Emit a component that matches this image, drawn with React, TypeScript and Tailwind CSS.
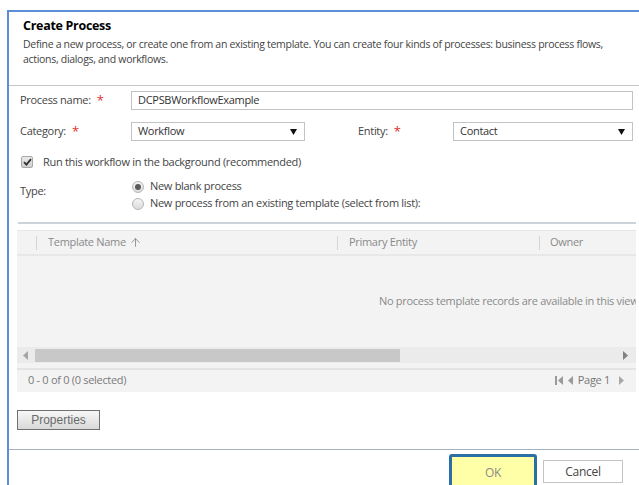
import { ArrowUp } from "lucide-react";

const Required = () => <span className="ml-[6px] text-[#e0312a] text-[13px] leading-none">*</span>;

const SelectBox = ({ value, width }: { value: string; width: string }) => (
  <div className={`${width} h-[19px] border border-[#c3c3c3] bg-white flex items-center justify-between pl-[6px] pr-[7px]`}>
    <span className="text-[#333]">{value}</span>
    <svg width="7" height="6" viewBox="0 0 7 6">
      <path d="M0 0 H7 L3.5 6 Z" fill="#111" />
    </svg>
  </div>
);

const Radio = ({ checked }: { checked?: boolean }) => (
  <span className="w-[12px] h-[12px] rounded-full border border-[#b5b5b5] bg-gradient-to-b from-[#f4f4f4] to-[#dcdcdc] flex items-center justify-center">
    {checked && <span className="w-[6px] h-[6px] rounded-full bg-[#5a5a5a]" />}
  </span>
);

const Triangle = ({ dir, color = "#9a9a9a" }: { dir: "left" | "right"; color?: string }) => (
  <svg width="5" height="9" viewBox="0 0 5 9">
    <path d={dir === "left" ? "M5 0 V9 L0 4.5 Z" : "M0 0 V9 L5 4.5 Z"} fill={color} />
  </svg>
);

export default function App() {
  return (
    <div className="w-[639px] h-[485px] bg-white overflow-hidden font-['Open_Sans',sans-serif] text-[11px] tracking-[-0.3px] text-[#444]">
      <div className="mt-[10px] ml-[7px] h-[475px] border-l-2 border-t-2 border-[#5a8fd8] flex flex-col">
        {/* heading */}
        <header className="h-[74px] pl-[14px] border-b border-[#c6c6c6] shrink-0">
          <h1 className="mt-[5px] text-[12.5px] leading-[18px] font-bold text-black">Create Process</h1>
          <p className="mt-[2px] text-[10.5px] leading-[15px] text-[#444] whitespace-nowrap">
            Define a new process, or create one from an existing template. You can create four kinds of processes: business process flows,
            <br />
            actions, dialogs, and workflows.
          </p>
        </header>

        {/* form */}
        <div className="pl-[11px] flex flex-col shrink-0">
          <div className="mt-[5px] h-[19px] flex items-center">
            <div className="w-[111px] flex items-center">
              Process name:
              <Required />
            </div>
            <div className="w-[502px] h-[19px] border border-[#c3c3c3] flex items-center pl-[6px] text-[#333]">
              DCPSBWorkflowExample
            </div>
          </div>

          <div className="mt-[12px] h-[19px] flex items-center">
            <div className="w-[111px] flex items-center">
              Category:
              <Required />
            </div>
            <SelectBox value="Workflow" width="w-[174px]" />
            <div className="w-[148px] pl-[53px] flex items-center">
              Entity:
              <Required />
            </div>
            <SelectBox value="Contact" width="w-[180px]" />
          </div>

          <div className="mt-[11px] h-[20px] flex items-center gap-[10px]">
            <span className="ml-[1px] w-[12px] h-[12px] rounded-[2px] border border-[#a9a9a9] bg-gradient-to-b from-[#e9e9e9] to-[#cfcfcf] flex items-center justify-center">
              <svg width="9" height="8" viewBox="0 0 9 8">
                <path d="M1 4.2 L3.4 6.6 L8 1.2" stroke="#333" strokeWidth="1.8" fill="none" />
              </svg>
            </span>
            <span>Run this workflow in the background (recommended)</span>
          </div>

          <div className="mt-[6px] flex">
            <div className="w-[112px] pt-[4px] leading-[17px]">Type:</div>
            <div className="flex flex-col">
              <label className="h-[17px] flex items-center gap-[6px]">
                <Radio checked />
                New blank process
              </label>
              <label className="h-[17px] flex items-center gap-[6px]">
                <Radio />
                New process from an existing template (select from list):
              </label>
            </div>
          </div>
        </div>

        <div className="mt-[10px] ml-[9px] w-[618px] h-[2px] bg-[#cdd3da] shrink-0" />

        {/* template grid */}
        <div className="mt-[6px] ml-[8px] w-[619px] h-[162px] bg-[#f3f3f3] border-t border-[#e6e6e6] flex flex-col text-[#8a8a8a] overflow-hidden shrink-0">
          <div className="h-[25px] border-b-2 border-[#e8e8e8] flex items-center shrink-0">
            <div className="w-[19px]" />
            <div className="w-[301px] flex items-center">
              <span className="w-px h-[14px] bg-[#d6d6d6]" />
              <span className="ml-[11px]">Template Name</span>
              <ArrowUp size={13} strokeWidth={1.4} className="ml-[3px] text-[#7a7a7a]" />
            </div>
            <div className="w-[202px] flex items-center">
              <span className="w-px h-[14px] bg-[#d6d6d6]" />
              <span className="ml-[11px]">Primary Entity</span>
            </div>
            <div className="flex-1 flex items-center">
              <span className="w-px h-[14px] bg-[#d6d6d6]" />
              <span className="ml-[10px]">Owner</span>
            </div>
          </div>

          <div className="h-[91px] flex items-center pl-[362px] whitespace-nowrap shrink-0">
            No process template records are available in this view.
          </div>

          <div className="h-[16px] bg-[#ebebeb] flex items-center shrink-0">
            <span className="ml-[6px] w-[12px] flex"><Triangle dir="left" color="#a6a6a6" /></span>
            <span className="w-[365px] h-[13px] bg-[#c8c8c8]" />
            <span className="ml-auto mr-[8px] flex"><Triangle dir="right" color="#808080" /></span>
          </div>

          <div className="mt-[5px] h-[2px] bg-[#e4e4e4] shrink-0" />

          <div className="h-[21px] flex items-center justify-between pl-[11px] pr-[12px] text-[#7a7a7a] shrink-0">
            <span>0 - 0 of 0 (0 selected)</span>
            <div className="flex items-center gap-[5px]">
              <span className="flex items-center gap-[1px]">
                <span className="w-[2px] h-[9px] bg-[#9a9a9a]" />
                <Triangle dir="left" />
              </span>
              <Triangle dir="left" />
              <span className="text-[#777]">Page 1</span>
              <span className="ml-[4px] flex"><Triangle dir="right" color="#a8a8a8" /></span>
            </div>
          </div>
        </div>

        <button className="mt-[18px] ml-[8px] w-[83px] h-[20px] border border-[#707070] bg-gradient-to-b from-[#f7f7f7] to-[#d9d9d9] font-['Liberation_Sans',sans-serif] text-[12px] tracking-normal text-[#6a6a6a] shrink-0">
          Properties
        </button>

        <div className="mt-[19px] h-px bg-[#a6b1bf] shrink-0" />

        {/* dialog buttons */}
        <div className="flex justify-end items-start pr-[16px] gap-[6px] shrink-0">
          <button className="mt-[4px] w-[88px] h-[38px] rounded-[3px] border-[3px] border-[#2a6fa6] bg-[#ffffa8] text-[12px] text-[#8a8a8a]">
            OK
          </button>
          <button className="mt-[10px] w-[80px] h-[23px] border border-[#c4c4c4] bg-white text-[12px] text-[#444]">
            Cancel
          </button>
        </div>
      </div>
    </div>
  );
}
